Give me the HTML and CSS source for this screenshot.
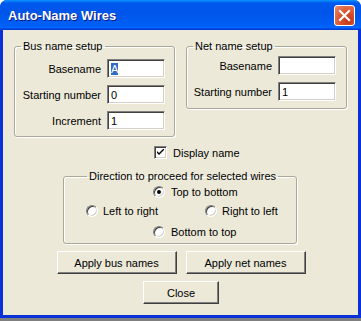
FILE: index.html
```html
<!DOCTYPE html>
<html lang="en">
<head>
    <meta charset="UTF-8">
    <title>Auto-Name Wires</title>
    <link rel="stylesheet" href="styles.css">
</head>
<body>
  <div class="window">
    <div class="titlebar">
      <span class="title">Auto-Name Wires</span>
      <div class="close-btn">
        <svg width="13" height="13" viewBox="0 0 13 13">
          <path d="M2 2 L11 11 M11 2 L2 11" stroke="#fff" stroke-width="2.2" stroke-linecap="square"/>
        </svg>
      </div>
    </div>

    <div class="client">
      <div class="top-row">
        <fieldset class="group bus-group">
          <legend>Bus name setup</legend>
          <div class="field-row">
            <label>Basename</label>
            <div class="textbox"><span class="selected">A</span></div>
          </div>
          <div class="field-row">
            <label>Starting number</label>
            <div class="textbox">0</div>
          </div>
          <div class="field-row">
            <label>Increment</label>
            <div class="textbox">1</div>
          </div>
        </fieldset>

        <fieldset class="group net-group">
          <legend>Net name setup</legend>
          <div class="field-row">
            <label>Basename</label>
            <div class="textbox"></div>
          </div>
          <div class="field-row">
            <label>Starting number</label>
            <div class="textbox">1</div>
          </div>
        </fieldset>
      </div>

      <div class="check-row">
        <span class="checkbox">
          <svg width="7" height="7" viewBox="0 0 7 7">
            <path d="M0 2 L0 4 L2 6 L7 1 L7 -1 L2 4 Z"/>
          </svg>
        </span>
        <span>Display name</span>
      </div>

      <fieldset class="group dir-group">
        <legend>Direction to proceed for selected wires</legend>
        <div class="radio-row center first">
          <span class="radio"><span class="dot"></span></span>
          <span>Top to bottom</span>
        </div>
        <div class="radio-row split">
          <div class="radio-item">
            <span class="radio"></span>
            <span>Left to right</span>
          </div>
          <div class="radio-item">
            <span class="radio"></span>
            <span>Right to left</span>
          </div>
        </div>
        <div class="radio-row center last">
          <span class="radio"></span>
          <span>Bottom to top</span>
        </div>
      </fieldset>

      <div class="button-row">
        <button class="btn wide">Apply bus names</button>
        <button class="btn wide">Apply net names</button>
      </div>
      <div class="button-row">
        <button class="btn close">Close</button>
      </div>
    </div>
  </div>
  <div class="taskbar-edge"></div>
</body>
</html>
```

FILE: styles.css
```css
body{
    margin: 0;
    background: #fff;
    font-family: "Liberation Sans", Arial, sans-serif;
    font-size: 11px;
    color: #000;
}

.window{
    width: 361px;
    height: 318px;
    box-sizing: border-box;
    display: flex;
    flex-direction: column;
    background: #0831d9;
    border-radius: 7px 7px 0 0;
    overflow: hidden;
}

.titlebar{
    height: 30px;
    flex-shrink: 0;
    display: flex;
    align-items: center;
    justify-content: space-between;
    padding: 0 6px 0 8px;
    background: linear-gradient(#0a97ff 0%, #0058ee 10%, #0055e8 45%, #0060f6 85%, #0066ff 92%, #003dd7 97%, #003dd7 100%);
}

.title{
    color: #fff;
    font-weight: bold;
    font-size: 13px;
    text-shadow: 1px 1px 0 #0a1883;
    margin-top: 1px;
}

.close-btn{
    width: 19px;
    height: 19px;
    border: 1px solid #fff;
    border-radius: 3px;
    background: radial-gradient(circle at 70% 75%, #c4351a 0%, #d9542f 45%, #f08c6c 100%);
    display: flex;
    align-items: center;
    justify-content: center;
    margin-top: 1px;
}

.client{
    flex: 1;
    margin: 0 3px 3px 3px;
    background: #ece9d8;
    padding: 10px 10px 0 11px;
}

.top-row{
    display: flex;
    gap: 11px;
    align-items: flex-start;
}

.group{
    margin: 0;
    padding: 0;
    border: 1px solid #aca899;
    border-radius: 3px;
    box-shadow: inset 1px 1px 0 #fff, 1px 1px 0 #fff;
}

.group legend{
    padding: 0 2px;
    margin-left: 6px;
    line-height: 13px;
}

.bus-group{
    width: 161px;
    box-sizing: border-box;
    padding: 6px 9px 6px 0;
}

.net-group{
    width: 161px;
    box-sizing: border-box;
    padding: 3px 10px 7px 0;
}

.field-row{
    display: flex;
    justify-content: flex-end;
    align-items: center;
    gap: 6px;
    margin-top: 7px;
}

.field-row:first-of-type{
    margin-top: 0;
}

.textbox{
    width: 58px;
    height: 19px;
    box-sizing: border-box;
    background: #fff;
    border: 1px solid;
    border-color: #7f7f7f #fff #fff #7f7f7f;
    box-shadow: inset 1px 1px 0 #404040, inset -1px -1px 0 #d4d0c8;
    padding: 3px 0 0 3px;
    line-height: 13px;
}

.selected{
    background: #316ac5;
    color: #fff;
}

.check-row{
    display: flex;
    align-items: center;
    gap: 6px;
    margin: 9px 0 0 140px;
}

.checkbox{
    width: 13px;
    height: 13px;
    box-sizing: border-box;
    background: #fff;
    border: 1px solid;
    border-color: #7f7f7f #fff #fff #7f7f7f;
    box-shadow: inset 1px 1px 0 #404040, inset -1px -1px 0 #d4d0c8;
    display: flex;
    align-items: center;
    justify-content: center;
}

.checkbox svg path{
    fill: #000;
}

.dir-group{
    width: 234px;
    box-sizing: border-box;
    margin: 11px 0 0 49px;
    padding: 0;
}

.dir-group legend{
    margin-left: 23px;
}

.radio-row{
    display: flex;
    align-items: center;
    height: 20px;
}

.radio-row.first{
    height: 18px;
}

.radio-row.last{
    height: 22px;
}

.radio-row.center{
    padding-left: 89px;
    gap: 6px;
}

.radio-row.split{
    padding-left: 22px;
    gap: 47px;
}

.radio-item{
    display: flex;
    align-items: center;
    gap: 5px;
}

.radio{
    width: 12px;
    height: 12px;
    box-sizing: border-box;
    border-radius: 50%;
    background: #fff;
    border: 1px solid;
    border-color: #7f7f7f #fff #fff #7f7f7f;
    box-shadow: inset 1px 1px 0 #404040, inset -1px -1px 0 #d4d0c8;
    display: flex;
    align-items: center;
    justify-content: center;
}

.dot{
    width: 4px;
    height: 4px;
    border-radius: 50%;
    background: #000;
}

.button-row{
    display: flex;
    justify-content: center;
    gap: 9px;
    margin-top: 7px;
}

.button-row + .button-row{
    margin-top: 7px;
}

.btn{
    font-family: inherit;
    font-size: 11px;
    height: 23px;
    background: #ece9d8;
    border: 1px solid;
    border-color: #fff #404040 #404040 #fff;
    box-shadow: inset -1px -1px 0 #808080;
    padding: 0;
    color: #000;
}

.btn.wide{
    width: 120px;
}

.btn.close{
    width: 76px;
}

.taskbar-edge{
    height: 3px;
    background: #7f7f7f;
}
```
